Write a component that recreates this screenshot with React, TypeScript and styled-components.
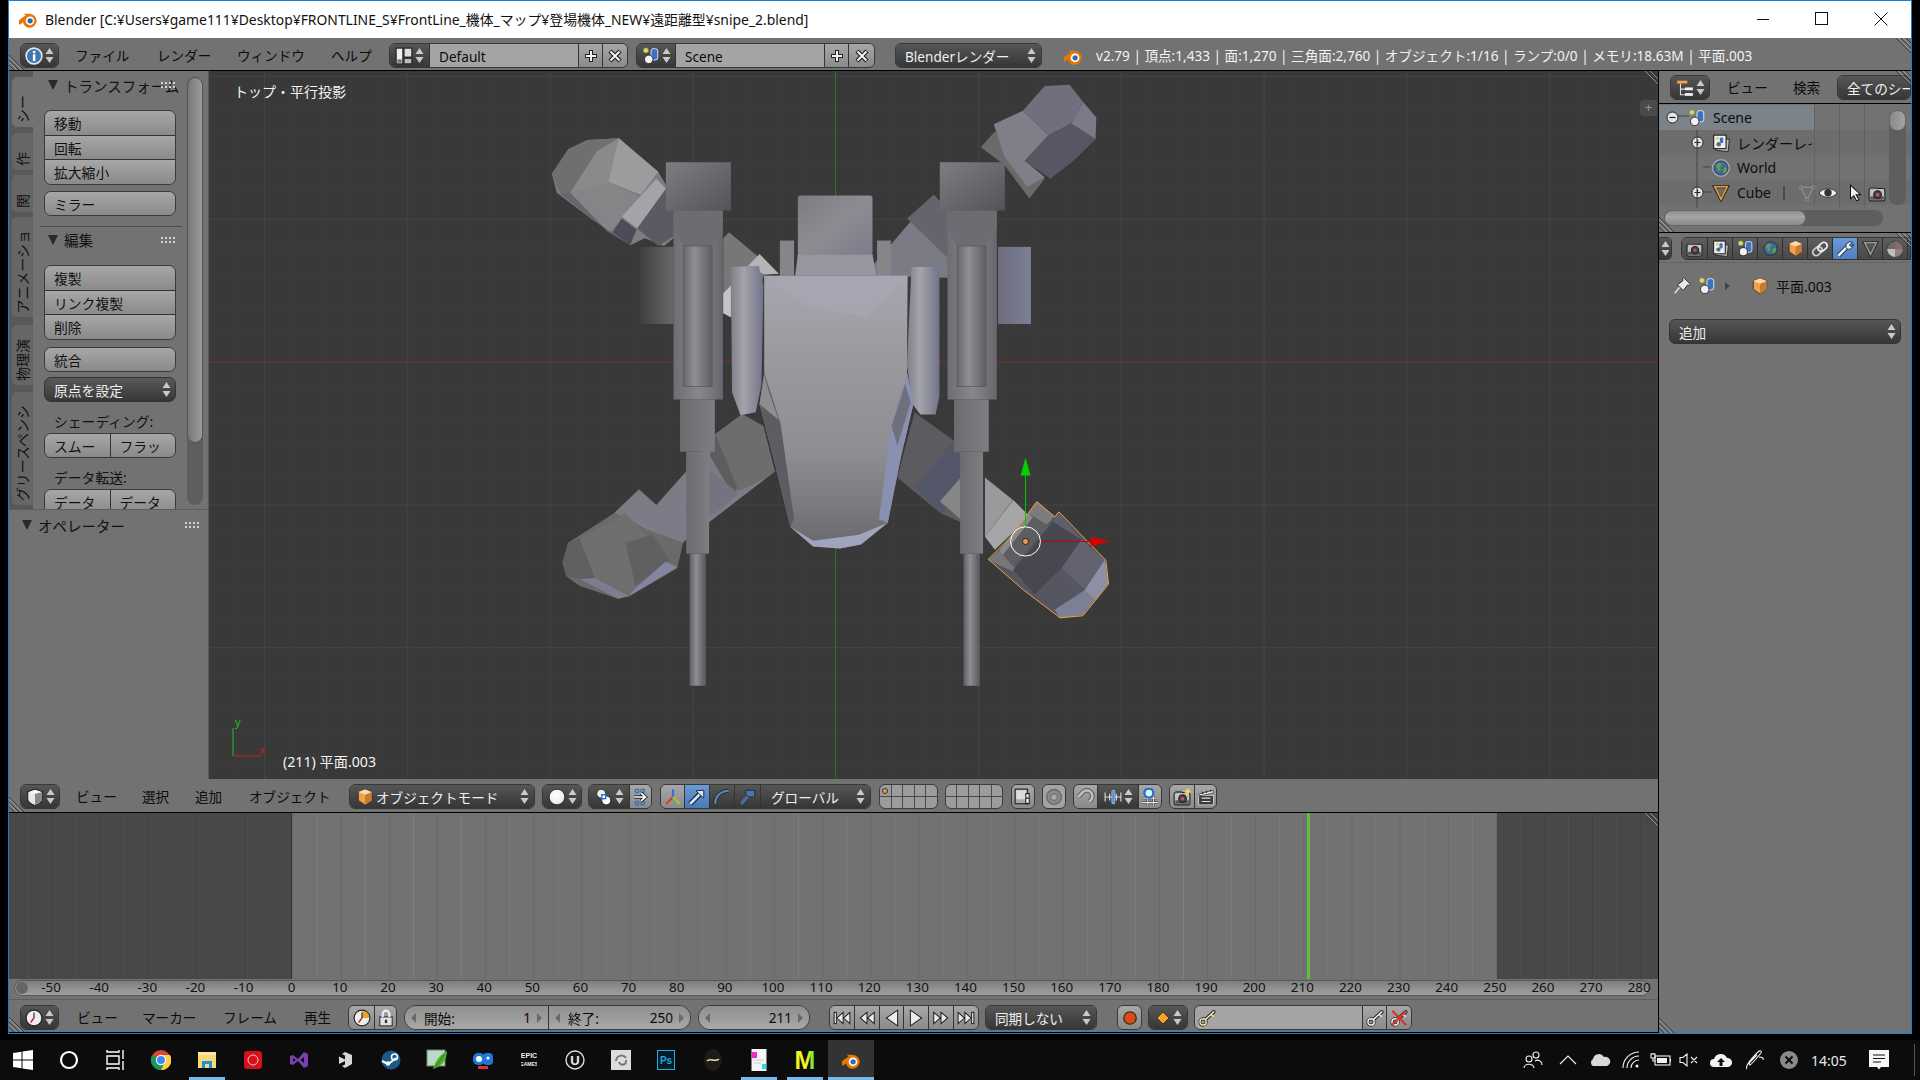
import React from "react";
import styled, { createGlobalStyle } from "styled-components";

const PANEL = "#727272";

const GlobalStyle = createGlobalStyle`
  html, body {
    margin: 0;
    padding: 0;
    background: #000;
  }
  body {
    width: 1920px;
    height: 1080px;
    overflow: hidden;
    font-family: "Noto Sans", "Noto Sans CJK JP", sans-serif;
  }
  * { box-sizing: border-box; }
`;

/* ---------- window frame ---------- */

const Page = styled.div`
  width: 1920px;
  height: 1080px;
  display: flex;
  flex-direction: column;
  background: #000;
`;

const Win = styled.div`
  width: 1904px;
  height: 1034px;
  margin-left: 8px;
  border: 1px solid #1a7fd0;
  display: flex;
  flex-direction: column;
`;

const TitleBar = styled.div`
  height: 37px;
  background: #fff;
  display: flex;
  align-items: center;
  padding: 0 0 2px 9px;
  color: #111;
  flex-shrink: 0;
`;

const TitleText = styled.span`
  margin-left: 7px;
  font-size: 13.9px;
  white-space: nowrap;
`;

const WinButtons = styled.div`
  margin-left: auto;
  margin-right: 1px;
  display: flex;
`;

const WinButton = styled.div`
  width: 59px;
  height: 35px;
  display: flex;
  align-items: center;
  justify-content: center;
`;

const Workspace = styled.div`
  flex: 1;
  display: flex;
  min-height: 0;
`;

const LeftCol = styled.div`
  width: 1650px;
  border-right: 1px solid #000;
  display: flex;
  flex-direction: column;
`;

const RightCol = styled.div`
  width: 252px;
  display: flex;
  flex-direction: column;
  background: ${PANEL};
`;

/* ---------- header bars and widgets ---------- */

const HeaderBar = styled.div<{ $h: number; $pad?: number }>`
  position: relative;
  height: ${(p) => p.$h}px;
  flex-shrink: 0;
  background: ${PANEL};
  border-bottom: 1px solid #000;
  display: flex;
  align-items: flex-start;
  padding-top: ${(p) => p.$pad ?? 5}px;
  padding-left: 11px;
  font-size: 13.6px;
  color: #0c0c0c;
`;

const MenuLabel = styled.div<{ $w: number; $ml?: number }>`
  width: ${(p) => p.$w}px;
  margin-left: ${(p) => p.$ml ?? 0}px;
  height: 25px;
  line-height: 25px;
  white-space: nowrap;
  flex-shrink: 0;
`;

const Group = styled.div<{ $w: number; $ml?: number; $round?: number }>`
  width: ${(p) => p.$w}px;
  margin-left: ${(p) => p.$ml ?? 0}px;
  height: 25px;
  flex-shrink: 0;
  display: flex;
  border: 1px solid #383838;
  border-radius: ${(p) => p.$round ?? 6}px;
  overflow: hidden;
`;

const toneBg = {
  dark: "linear-gradient(#565656, #363636)",
  light: "linear-gradient(#a7a7a7, #8a8a8a)",
  blue: "linear-gradient(#6a9ad8, #4a78b8)",
  flat: "#a4a4a4",
};

const Seg = styled.div<{ $tone: keyof typeof toneBg; $w?: number; $pad?: number }>`
  ${(p) => (p.$w ? `width:${p.$w}px; flex-shrink:0;` : "flex:1;")}
  min-width: 0;
  height: 100%;
  background: ${(p) => toneBg[p.$tone]};
  color: ${(p) => (p.$tone === "dark" ? "#f0f0f0" : "#0c0c0c")};
  display: flex;
  align-items: center;
  justify-content: ${(p) => (p.$pad !== undefined ? "flex-start" : "center")};
  padding-left: ${(p) => p.$pad ?? 0}px;
  gap: 2px;
  white-space: nowrap;
  font-size: 13.6px;
  & + & {
    border-left: 1px solid #333;
  }
`;

const SegText = styled.span`
  flex: 1;
  overflow: hidden;
  padding-top: 1px;
`;

const SegEnd = styled.span`
  width: 3px;
  flex-shrink: 0;
`;

const StatsText = styled.div`
  margin-left: 13px;
  line-height: 25px;
  font-size: 13.6px;
  color: #f2f2f2;
  white-space: nowrap;
`;

const LogoWrap = styled.div`
  margin-left: 21px;
  height: 25px;
  display: flex;
  align-items: center;
`;

const Hatch = styled.svg<{ $side: string }>`
  position: absolute;
  width: 15px;
  height: 15px;
  ${(p) => p.$side}
`;

const Corner = ({ side, flip }: { side: string; flip?: boolean }) => (
  <Hatch $side={side} viewBox="0 0 15 15">
    <g stroke="#3a3a3a" strokeWidth="1" opacity="0.9">
      {flip ? (
        <>
          <path d="M0 0 15 15M5 0 15 10M10 0 15 5" />
          <path d="M2 0 15 13M7 0 15 8" stroke="#9a9a9a" />
        </>
      ) : (
        <>
          <path d="M0 0 15 15M0 5 10 15M0 10 5 15" />
          <path d="M0 2 13 15M0 7 8 15" stroke="#9a9a9a" />
        </>
      )}
    </g>
  </Hatch>
);

/* ---------- small icons ---------- */

const IcSvg = styled.svg`
  flex-shrink: 0;
`;

const Ic = ({ s = 18, children }: { s?: number; children: React.ReactNode }) => (
  <IcSvg width={s} height={s} viewBox="0 0 16 16">
    {children}
  </IcSvg>
);

const UpDown = ({ c = "#c9c9c9" }: { c?: string }) => (
  <IcSvg width="9" height="17" viewBox="0 0 9 17">
    <path d="M4.5 1 8.5 7H.5zM4.5 16 .5 10h8z" fill={c} />
  </IcSvg>
);

const InfoIcon = () => (
  <Ic>
    <circle cx="8" cy="8" r="7" fill="#3f77b5" stroke="#e8e8e8" strokeWidth="1.4" />
    <rect x="7" y="3.5" width="2.2" height="2" fill="#fff" />
    <rect x="7" y="6.5" width="2.2" height="6" fill="#fff" />
  </Ic>
);

const LayoutIcon = () => (
  <Ic>
    <rect x="1" y="1" width="6" height="14" fill="#eee" stroke="#222" />
    <rect x="8" y="1" width="7" height="8" fill="#ddd" stroke="#222" />
    <rect x="8" y="10" width="7" height="5" fill="#bbb" stroke="#222" />
    <rect x="2" y="11" width="4" height="3" fill="#777" />
  </Ic>
);

const SceneIcon = ({ s = 18 }: { s?: number }) => (
  <Ic s={s}>
    <circle cx="3.5" cy="3" r="2.4" fill="#d8d86a" stroke="#76763a" strokeWidth=".6" />
    <rect x="8" y="1.5" width="6" height="10" rx="2" fill="#3c72c4" stroke="#e8eefa" strokeWidth=".8" />
    <circle cx="6" cy="11" r="3.8" fill="#f2f2f2" stroke="#222" strokeWidth=".8" />
  </Ic>
);

const BlenderLogo = ({ s = 20 }: { s?: number }) => (
  <Ic s={s}>
    <path
      d="M1 8.8 6.2 5 4.4 3.8h5a6 6 0 0 1 5.6 5.6A6 6 0 0 1 9.2 15 5.2 5.2 0 0 1 4 10.6L1.7 12.5C.6 12.5.6 9.5 1 8.8z"
      fill="#ea7600"
    />
    <circle cx="9.6" cy="9.4" r="3.5" fill="#fff" />
    <circle cx="9.7" cy="9.4" r="2.1" fill="#2a6cb0" />
  </Ic>
);

const PlusIcon = () => (
  <Ic s={16}>
    <path d="M8 2v12M2 8h12" stroke="#222" strokeWidth="4" />
    <path d="M8 3v10M3 8h10" stroke="#f2f2f2" strokeWidth="2" />
  </Ic>
);

const CrossIcon = () => (
  <Ic s={16}>
    <path d="M3 3 13 13M13 3 3 13" stroke="#222" strokeWidth="4.4" />
    <path d="M3.5 3.5 12.5 12.5M12.5 3.5 3.5 12.5" stroke="#f2f2f2" strokeWidth="2" />
  </Ic>
);

const ViewCube = () => (
  <Ic>
    <path d="M8 1 14.5 3.5V10C14.5 13 11 14.5 8 15.5 5 14.5 1.5 13 1.5 10V3.5z" fill="#e8e8e8" stroke="#222" />
    <path d="M8 5 14 3.5V10C14 12.5 11 14 8 15z" fill="#888" />
    <path d="M2 3.7 8 5 14 3.5 8 1.5z" fill="#fafafa" />
  </Ic>
);

const OrangeCube = ({ s = 18 }: { s?: number }) => (
  <Ic s={s}>
    <path d="M8 1 14 3.5V11L8 15 2 11V3.5z" fill="#f4a04a" stroke="#333" strokeWidth=".8" />
    <path d="M8 6 14 3.5V11L8 15z" fill="#c87c32" />
    <path d="M2 3.5 8 6 14 3.5 8 1z" fill="#fbd9a8" />
  </Ic>
);

const Sphere = () => (
  <Ic>
    <defs>
      <radialGradient id="sph" cx=".45" cy=".4" r=".7">
        <stop offset="0" stopColor="#fff" />
        <stop offset=".7" stopColor="#eee" />
        <stop offset="1" stopColor="#999" />
      </radialGradient>
    </defs>
    <circle cx="8" cy="8" r="7" fill="url(#sph)" stroke="#222" strokeWidth=".8" />
  </Ic>
);

const PivotIcon = () => (
  <Ic>
    <circle cx="5.5" cy="5" r="4" fill="#eee" stroke="#222" strokeWidth=".8" />
    <circle cx="10" cy="11" r="4" fill="#fff" stroke="#222" strokeWidth=".8" />
    <rect x="6" y="6" width="3.5" height="3.5" fill="#dff" stroke="#2a6cd0" strokeWidth="1.2" />
  </Ic>
);

const AlignIcon = () => (
  <Ic>
    <g fill="none" stroke="#3a6cc0" strokeWidth="1.2">
      <rect x="3" y="1" width="3" height="3" rx="1" />
      <rect x="8" y="1" width="3" height="3" rx="1" />
      <rect x="3" y="12" width="3" height="3" rx="1" />
      <rect x="8" y="12" width="3" height="3" rx="1" />
    </g>
    <path d="M2 8h10M8 4.5 12 8 8 11.5" stroke="#222" strokeWidth="3" fill="none" />
    <path d="M2 8h10M8 4.5 12 8 8 11.5" stroke="#fff" strokeWidth="1.5" fill="none" />
  </Ic>
);

const AxisIcon = () => (
  <Ic>
    <path d="M8 8 8 1" stroke="#3a6ee0" strokeWidth="2" />
    <path d="M8 8 2 14" stroke="#e03a2a" strokeWidth="2" />
    <path d="M8 8 14 14" stroke="#8ed028" strokeWidth="2" />
  </Ic>
);

const MoveArrow = () => (
  <Ic>
    <path d="M2 14 11 5" stroke="#123" strokeWidth="4.5" />
    <path d="M2 14 11 5" stroke="#d8e8fa" strokeWidth="2.4" />
    <path d="M7 2.5 14 2V9z" fill="#d8e8fa" stroke="#123" strokeWidth=".8" />
  </Ic>
);

const RotateArc = () => (
  <Ic>
    <path d="M2 14C2 7 7 2.5 14 2.5" stroke="#222" strokeWidth="3.4" fill="none" />
    <path d="M2 14C2 7 7 2.5 14 2.5" stroke="#5a86c0" strokeWidth="2" fill="none" />
  </Ic>
);

const ScalePin = () => (
  <Ic>
    <path d="M2 14 8 7" stroke="#456ea8" strokeWidth="3" />
    <path d="M6 2h8v6H9L6 6z" fill="#4a76b4" stroke="#223" strokeWidth=".8" />
  </Ic>
);

const LayerCopy = () => (
  <Ic>
    <rect x="1" y="1" width="11" height="13" fill="#a8a8a8" stroke="#222" />
    <rect x="2" y="2" width="9" height="8" fill="#ddd" />
    <path d="M12 5v4M12 9v4" stroke="#fff" strokeWidth="3" />
    <path d="M10.5 5h3v4h-3zM10.5 9h3v5h-3z" fill="none" stroke="#222" />
  </Ic>
);

const ProportionalIcon = () => (
  <Ic>
    <circle cx="8" cy="8" r="6.5" fill="#8c8c8c" stroke="#6e6e6e" strokeWidth="1.5" />
    <circle cx="8" cy="8" r="3" fill="#aaa" stroke="#777" strokeWidth="1.4" />
  </Ic>
);

const MagnetIcon = () => (
  <Ic>
    <path d="M3 13V6.5a4.5 4.5 0 0 1 4.5-4.5 5 5 0 0 1 5.5 5v2" transform="rotate(45 8 8)" fill="none" stroke="#555" strokeWidth="4" />
    <path d="M3 13V6.5a4.5 4.5 0 0 1 4.5-4.5 5 5 0 0 1 5.5 5v2" transform="rotate(45 8 8)" fill="none" stroke="#bdbdbd" strokeWidth="2.4" />
  </Ic>
);

const SnapIcon = () => (
  <Ic>
    <path d="M1 4v8M15 4v8M1 8h14M5 5v6M11 5v6" stroke="#ddd" strokeWidth="1" />
    <rect x="7" y="2" width="2.6" height="12" rx="1" fill="#4a8ae0" stroke="#cde" strokeWidth=".6" />
  </Ic>
);

const GridDot = () => (
  <Ic>
    <path d="M1 9h14M1 13h14M6 7v9M11 7v9" stroke="#222" strokeWidth="1.8" />
    <path d="M1 9h14M1 13h14M6 7v9M11 7v9" stroke="#eee" strokeWidth=".9" />
    <circle cx="7" cy="4.5" r="4" fill="#cfe" stroke="#2a6ad0" strokeWidth="2" />
  </Ic>
);

const CameraIcon = ({ s = 18, star }: { s?: number; star?: boolean }) => (
  <Ic s={s}>
    <rect x="1" y="4" width="14" height="11" rx="1.5" fill="#c2c2c2" stroke="#222" />
    <rect x="2" y="2.5" width="6" height="2" fill="#555" />
    <rect x="2" y="11" width="12" height="3" fill="#555" />
    <circle cx="8.5" cy="9.5" r="3.4" fill="#444" stroke="#222" />
    <circle cx="8.5" cy="9.5" r="1.6" fill="#c85050" />
    {star && <path d="M13 .5V6M10.3 3.2H15.7" stroke="#f2d860" strokeWidth="2" />}
  </Ic>
);

const ClapIcon = () => (
  <Ic>
    <rect x="1.5" y="6.5" width="13" height="8.5" fill="#3a3a3a" stroke="#ddd" strokeWidth=".7" />
    <path d="M1.5 5.5 14 2 14.5 4.5 2 7z" fill="#eee" stroke="#222" strokeWidth=".6" />
    <path d="M4 9h8M4 12h8" stroke="#ddd" />
    <path d="M4.5 5 5.5 3.5M8 4 9 2.7M11.5 3 12.5 2" stroke="#222" strokeWidth="1.2" />
  </Ic>
);

const ClockIcon = ({ part }: { part?: boolean }) => (
  <Ic>
    <circle cx="8" cy="8" r="7" fill="#eee" stroke="#222" />
    {part && <path d="M8 1.5A6.500 6.500 0 0 1 14.500 8H8z" fill="#f0a030" />}
    <path d="M8 8 5 12" stroke="#c82020" strokeWidth="1.2" />
    <path d="M8 8V3" stroke="#222" strokeWidth="1" />
  </Ic>
);

const LockIcon = () => (
  <Ic>
    <rect x="2.5" y="7" width="11" height="8" fill="#e2e2e2" stroke="#333" />
    <path d="M5 7V4.5a3 3 0 0 1 6 0V7" fill="none" stroke="#eee" strokeWidth="2" />
    <rect x="7" y="9.5" width="2" height="3" fill="#333" />
  </Ic>
);

const tri = { fill: "#ececec", stroke: "#222", strokeWidth: 0.9 };

const Transport = ({ kind }: { kind: string }) => {
  const shapes: Record<string, React.ReactNode> = {
    first: (
      <>
        <rect x="1" y="3" width="2" height="10" {...tri} />
        <path d="M9 3v10L3.5 8zM15 3v10L9.5 8z" {...tri} />
      </>
    ),
    prev: <path d="M8 3v10L2 8zM14.5 3v10L8.5 8z" {...tri} />,
    back: <path d="M13 1v14L3 8z" {...tri} />,
    play: <path d="M3 1v14L13 8z" {...tri} />,
    next: <path d="M1.5 3v10L7.5 8zM8 3v10L14 8z" {...tri} />,
    last: (
      <>
        <path d="M1 3v10L6.5 8zM7 3v10L12.5 8z" {...tri} />
        <rect x="13" y="3" width="2" height="10" {...tri} />
      </>
    ),
  };
  return <Ic>{shapes[kind]}</Ic>;
};

const RecordIcon = () => (
  <Ic>
    <circle cx="8" cy="8" r="5.5" fill="#e04a1a" stroke="#331" strokeWidth="1.2" />
  </Ic>
);

const DiamondIcon = () => (
  <Ic s={16}>
    <path d="M8 2 14 8 8 14 2 8z" fill="#f0a428" stroke="#322" strokeWidth=".8" />
  </Ic>
);

const KeyIcon = ({ gold, red }: { gold?: boolean; red?: boolean }) => (
  <Ic>
    <g fill="none" strokeLinecap="round">
      <circle cx="4.5" cy="11.5" r="2.8" stroke="#222" strokeWidth="2.6" />
      <path d="M6.5 9.5 14 2.5" stroke="#222" strokeWidth="3.2" />
      <circle cx="4.5" cy="11.5" r="2.8" stroke={gold ? "#efe2a8" : "#eee"} strokeWidth="1.3" />
      <path d="M6.5 9.5 14 2.5M12 5l1.5 1.5" stroke={gold ? "#efe2a8" : "#eee"} strokeWidth="1.4" />
    </g>
    {red && <path d="M2 1.5 14.5 14.5M14 2 2 14" stroke="#d83030" strokeWidth="1.8" />}
  </Ic>
);

const OutlinerIcon = () => (
  <Ic>
    <path d="M4 4v10h4M4 9h4" stroke="#ddd" fill="none" />
    <rect x="1" y="1.5" width="9" height="2.5" fill="#f0a848" />
    <rect x="8" y="7.5" width="7" height="2.5" fill="#eee" />
    <rect x="8" y="12.5" width="7" height="2.5" fill="#eee" />
  </Ic>
);

const RenderLayers = ({ s = 18 }: { s?: number }) => (
  <Ic s={s}>
    <rect x="4" y="4" width="11" height="11" fill="#bbb" stroke="#333" transform="rotate(6 9 9)" />
    <rect x="1.5" y="1" width="11" height="12" fill="#eee" stroke="#222" />
    <circle cx="5" cy="4" r="1.3" fill="#d8d86a" />
    <rect x="7" y="3" width="3" height="5" rx="1" fill="#3c72c4" />
    <circle cx="6" cy="9" r="2" fill="#666" />
  </Ic>
);

const WorldIcon = ({ s = 18, ring }: { s?: number; ring?: boolean }) => (
  <Ic s={s}>
    {ring && <circle cx="8" cy="8" r="8" fill="#a9a9b9" />}
    <circle cx="8" cy="8" r="6.3" fill="#3a6e9c" stroke="#223" strokeWidth=".7" />
    <path d="M3 5.5 7 3l2 2-2 2 .8 3-2 1-1-3zM9.5 9l3-2 1 1.5-1 3.5-2 .7z" fill="#6a9a48" />
  </Ic>
);

const MeshTri = ({ c = "#f09a3c", s = 18 }: { c?: string; s?: number }) => (
  <Ic s={s}>
    <path d="M2 2.5H14L8 14z" fill="none" stroke="#2a2a2a" strokeWidth="2.6" />
    <path d="M2.5 2.5H13.5L8 13.5z" fill="none" stroke={c} strokeWidth="1.4" />
  </Ic>
);

const MeshGhost = () => (
  <Ic>
    <path d="M2.5 3H13.5L8 14z" fill="none" stroke="#8c8c8c" strokeWidth="1.2" />
    <circle cx="2.5" cy="3" r="1.5" fill="#6e6e6e" stroke="#999" strokeWidth=".6" />
    <circle cx="13.5" cy="3" r="1.5" fill="#6e6e6e" stroke="#999" strokeWidth=".6" />
    <circle cx="8" cy="14" r="1.5" fill="#6e6e6e" stroke="#999" strokeWidth=".6" />
  </Ic>
);

const EyeIcon = () => (
  <Ic>
    <path d="M.2 8C3 3 13 3 15.8 8 13 13 3 13 .2 8z" fill="#f5f5f5" stroke="#222" strokeWidth=".7" />
    <circle cx="8" cy="7.800" r="3.3" fill="#333" />
  </Ic>
);

const CursorIcon = () => (
  <Ic>
    <path d="M4 1V13L7 10.5 9.5 15 11.5 14 9 9.5H13z" fill="#f2f2f2" stroke="#111" strokeWidth=".9" />
  </Ic>
);

const ChainIcon = () => (
  <Ic>
    <g fill="none" transform="rotate(-40 8 8)">
      <rect x=".5" y="5" width="9" height="6" rx="3" stroke="#ccc" strokeWidth="1.6" />
      <rect x="6.5" y="5" width="9" height="6" rx="3" stroke="#eee" strokeWidth="1.6" />
    </g>
  </Ic>
);

const WrenchIcon = () => (
  <Ic>
    <path d="M2 14 10 6" stroke="#123" strokeWidth="4" />
    <path d="M2 14 10 6" stroke="#e8f0fa" strokeWidth="2.4" />
    <path d="M9 7A4 4 0 0 1 14.5 2L12 4.5 13.5 6 15.2 3.5A4 4 0 0 1 10 8z" fill="#e8f0fa" stroke="#123" strokeWidth=".8" />
  </Ic>
);

const MaterialIcon = () => (
  <Ic>
    <circle cx="8" cy="8" r="7" fill="#6a6a6a" stroke="#333" strokeWidth=".6" />
    <path d="M8 1A7 7 0 0 1 15 8H8z" fill="#8a6a60" />
    <path d="M1 8A7 7 0 0 0 8 15V8z" fill="#c0bcba" />
    <path d="M8 15A7 7 0 0 0 15 8H8z" fill="#948080" />
  </Ic>
);

const PinIcon = () => (
  <Ic>
    <path d="M1.5 14.5 6.5 8.5" stroke="#ddd" strokeWidth="1.5" />
    <path d="M4 7 9 3l-.5-1.5 1-1 6 6-1 1L13 7l-4 5z" fill="#e8e8e8" stroke="#222" strokeWidth=".8" />
  </Ic>
);

const Expander = ({ open }: { open?: boolean }) => (
  <IcSvg width="13" height="13" viewBox="0 0 13 13">
    <circle cx="6.5" cy="6.5" r="5.5" fill="#e4e4e4" stroke="#222" />
    <path d={open ? "M3.5 6.5h6" : "M3.5 6.5h6M6.5 3.5v6"} stroke="#222" strokeWidth="1.2" />
  </IcSvg>
);

/* ---------- toolshelf ---------- */

const View3D = styled.div`
  height: 708px;
  display: flex;
  flex-shrink: 0;
`;

const Toolshelf = styled.div`
  width: 200px;
  flex-shrink: 0;
  display: flex;
  flex-direction: column;
  background: ${PANEL};
  border-right: 1px solid #5a5a5a;
`;

const ToolshelfTop = styled.div`
  height: 438px;
  display: flex;
  overflow: hidden;
`;

const TabStrip = styled.div`
  width: 24px;
  flex-shrink: 0;
  background: #585858;
  padding: 6px 0 0 3px;
  display: flex;
  flex-direction: column;
`;

const VTab = styled.div<{ $h: number; $mb: number; $on?: boolean }>`
  width: 21px;
  height: ${(p) => p.$h}px;
  margin-bottom: ${(p) => p.$mb}px;
  padding-bottom: 4px;
  background: ${(p) => (p.$on ? PANEL : "#666")};
  border-radius: 5px 0 0 5px;
  display: flex;
  align-items: flex-end;
  justify-content: center;
  overflow: hidden;
`;

const VTabText = styled.span`
  writing-mode: vertical-rl;
  text-orientation: sideways;
  transform: rotate(180deg);
  font-size: 14px;
  line-height: 15px;
  color: #111;
  white-space: nowrap;
`;

const PanelCol = styled.div`
  width: 154px;
  flex-shrink: 0;
  padding-left: 11px;
  font-size: 13.8px;
  color: #111;
`;

const PanelHead = styled.div<{ $h: number; $mb: number; $w?: number }>`
  height: ${(p) => p.$h}px;
  margin-bottom: ${(p) => p.$mb}px;
  display: flex;
  align-items: center;
  position: relative;
  font-size: 14.5px;
  white-space: nowrap;
  width: ${(p) => p.$w ?? 132}px;
`;

const Tri = styled.span`
  width: 0;
  height: 0;
  margin: 0 6px 0 4px;
  border-left: 5px solid transparent;
  border-right: 5px solid transparent;
  border-top: 10px solid #2a2a2a;
  flex-shrink: 0;
`;

const GripBox = styled.svg<{ $right: number }>`
  position: absolute;
  right: ${(p) => p.$right}px;
  top: 50%;
  margin-top: -3px;
  width: 15px;
  height: 7px;
`;

const Grip = ({ right = 0 }: { right?: number }) => (
  <GripBox $right={right} viewBox="0 0 15 7">
    {[0, 4, 8, 12].map((x) =>
      [0, 4].map((y) => <rect key={`${x}${y}`} x={x} y={y} width="2" height="2" fill="#d0d0d0" />)
    )}
  </GripBox>
);

const Stack = styled.div<{ $n: number; $mt?: number }>`
  width: 132px;
  height: ${(p) => p.$n * 25}px;
  margin-top: ${(p) => p.$mt ?? 0}px;
  border: 1px solid #3a3a3a;
  border-radius: 7px;
  overflow: hidden;
  display: flex;
  flex-direction: column;
`;

const StackBtn = styled.div`
  flex: 1;
  padding-left: 9px;
  display: flex;
  align-items: center;
  background: linear-gradient(#a7a7a7, #8a8a8a);
  white-space: nowrap;
  & + & {
    border-top: 1px solid #333;
  }
`;

const DarkMenu = styled.div<{ $mt?: number }>`
  width: 132px;
  height: 25px;
  margin-top: ${(p) => p.$mt ?? 0}px;
  padding: 0 4px 0 9px;
  border: 1px solid #333;
  border-radius: 7px;
  background: linear-gradient(#5a5a5a, #363636);
  color: #f0f0f0;
  display: flex;
  align-items: center;
  justify-content: space-between;
`;

const Divider = styled.div`
  width: 142px;
  height: 1px;
  margin: 10px 0 0 -4px;
  background: #4e4e4e;
`;

const SubLabel = styled.div`
  height: 20px;
  margin-top: 10px;
  padding-left: 10px;
  line-height: 19px;
`;

const SplitRow = styled.div`
  width: 132px;
  height: 25px;
  margin-top: 1px;
  border: 1px solid #3a3a3a;
  border-radius: 7px;
  overflow: hidden;
  display: flex;
`;

const SplitBtn = styled.div`
  flex: 1;
  padding-left: 9px;
  display: flex;
  align-items: center;
  background: linear-gradient(#a7a7a7, #8a8a8a);
  & + & {
    border-left: 1px solid #333;
  }
`;

const ScrollTrack = styled.div`
  width: 16px;
  height: 428px;
  margin-top: 6px;
  border-radius: 8px;
  background: #5e5e5e;
  flex-shrink: 0;
`;

const ScrollThumb = styled.div`
  height: 366px;
  border-radius: 8px;
  background: linear-gradient(90deg, #777, #9c9c9c);
  border: 1px solid #555;
`;

const OperatorPanel = styled.div`
  flex: 1;
  border-top: 1px solid #5e5e5e;
  padding: 3px 0 0 9px;
  color: #111;
`;

/* ---------- 3d viewport ---------- */

const Viewport = styled.div`
  flex: 1;
  position: relative;
  overflow: hidden;
  background-color: #393939;
  background-image: linear-gradient(90deg, #434343 1px, transparent 1px),
    linear-gradient(#434343 1px, transparent 1px),
    linear-gradient(90deg, #3c3c3c 1px, transparent 1px),
    linear-gradient(#3c3c3c 1px, transparent 1px);
  background-size: 142.8px 142.8px, 142.8px 142.8px, 28.56px 28.56px, 28.56px 28.56px;
  background-position: 55px 0, 0 5px, 27px 0, 0 5px;
`;

const ViewName = styled.div`
  position: absolute;
  left: 25px;
  top: 10px;
  color: #f4f4f4;
  font-size: 14px;
`;

const ObjName = styled.div`
  position: absolute;
  left: 74px;
  top: 680px;
  color: #f4f4f4;
  font-size: 14.2px;
`;

const AxisWidget = styled.svg`
  position: absolute;
  left: 20px;
  top: 645px;
  width: 44px;
  height: 50px;
`;

const AxisLines = styled.svg`
  position: absolute;
  left: 0;
  top: 0;
`;

const ModelSvg = styled.svg`
  position: absolute;
  left: 321px;
  top: 9px;
  width: 600px;
  height: 620px;
`;

const PlusTab = styled.div`
  position: absolute;
  right: 1px;
  top: 29px;
  width: 17px;
  height: 16px;
  border-radius: 4px 0 0 4px;
  background: #4a4a4a;
  color: #999;
  font-size: 13px;
  line-height: 15px;
  text-align: center;
`;

type Face = [string, string];

const backFaces: Face[] = [
  // upper left pod
  ["57,237 100,175 150,152 232,147 335,232 355,265 375,300 375,400 350,420 300,400 262,418 212,385 145,340 70,285", "#7d7d7f"],
  ["57,237 100,175 150,152 232,147 175,180 105,285 78,287", "#6f6f72"],
  ["175,180 232,147 270,180 205,258 155,310 105,285", "#8a8a8c"],
  ["232,147 335,232 290,290 205,258", "#9c9c9e"],
  ["105,285 205,258 285,295 240,350 205,385", "#858587"],
  ["78,287 105,285 205,385 262,418 165,355", "#66666e"],
  ["215,385 240,350 278,378 262,418", "#4c4c58"],
  ["280,375 355,275 375,300 375,395 335,420", "#5a5a62"],
  ["240,345 330,250 355,275 280,375", "#a4a4a8"],
  // inner upper left arm
  ["505,400 520,385 650,490 612,492 600,530 525,600 505,590", "#777778"],
  ["570,470 600,440 650,490 612,492", "#b5b5b8"],
  ["505,540 525,520 525,600 505,590", "#c4c4c6"],
  // upper right pod and arm
  ["1178,170 1215,130 1345,250 1305,300 1240,215", "#6a6a6a"],
  ["1212,112 1288,78 1355,140 1293,205 1345,245 1300,270 1240,195", "#7f7f88"],
  ["1288,78 1345,15 1410,12 1445,55 1415,110 1355,140", "#6f6f7d"],
  ["1355,140 1415,110 1478,150 1420,205 1360,250 1293,205", "#565664"],
  ["1415,110 1445,55 1480,95 1478,150", "#7a7a88"],
  // inner upper right arm
  ["895,470 1055,290 1092,330 1092,500 905,495", "#7b7b85"],
  ["985,350 1055,290 1092,330 1092,450", "#64646f"],
  // lower left arm
  ["220,1095 285,1035 330,1075 408,990 485,895 555,845 640,990 540,1065 405,1165 360,1215 300,1135", "#7c7c88"],
  ["470,950 485,895 545,1030 530,1050", "#5d5d5d"],
  ["485,895 555,845 610,875 640,990 610,1010 545,1040", "#6d6d6d"],
  ["468,985 545,1045 500,1085 468,1100", "#74747f"],
  // lower left pod
  ["85,1220 100,1170 220,1095 300,1135 400,1170 385,1235 260,1305 230,1312 130,1280 95,1255", "#6a6a6a"],
  ["85,1220 100,1170 130,1160 170,1260 130,1262 95,1255", "#606060"],
  ["130,1160 250,1095 365,1215 265,1300 170,1260", "#6f6f6f"],
  ["250,1170 320,1150 365,1215 275,1280", "#606060"],
  ["130,1262 170,1260 260,1305 230,1312", "#7d7d90"],
  ["260,1305 385,1232 355,1218 270,1290", "#8484a0"],
  // lower right arm
  ["960,1005 1005,840 1112,915 1130,950 1130,1120 1075,1097", "#5c5c60"],
  ["1005,1030 1100,920 1130,950 1130,1050 1075,1097", "#54566a"],
  ["1071,1066 1128,1003 1128,1113", "#868686"],
  ["1189,1005 1262,1062 1189,1155", "#9a9a9c"],
  ["1189,1155 1263,1062 1306,1104 1215,1188", "#a6a6a8"],
];

const selectedFaces: Face[] = [
  ["1197,1214 1226,1190 1267,1226 1263,1243", "#777777"],
  ["1302,1096 1324,1065 1371,1104 1350,1125", "#7c7c7c"],
  ["1226,1190 1236,1201 1315,1106 1302,1096", "#8a8a8a"],
  ["1236,1201 1315,1106 1354,1129 1263,1231", "#5e5e60"],
  ["1367,1117 1380,1092 1441,1163", "#5f5f6c"],
  ["1263,1239 1367,1117 1441,1163 1389,1235 1319,1302", "#47474f"],
  ["1441,1163 1502,1214 1450,1290 1389,1235", "#63636f"],
  ["1319,1302 1389,1235 1450,1290 1371,1340", "#565662"],
  ["1502,1214 1511,1273 1445,1353 1385,1361 1371,1340 1450,1290", "#7c8094"],
  ["1450,1290 1502,1214 1511,1273 1478,1315", "#8e90a6"],
];

const SELECTED_OUTLINE =
  "1325,1067 1372,1105 1382,1092 1505,1215 1512,1275 1445,1355 1385,1360 1290,1290 1198,1212 1262,1150 1310,1085";

const Gun = ({ x }: { x: number }) => (
  <g>
    <rect x={x + 62} y="1198" width="43" height="334" fill="url(#gunThin)" />
    <rect x={x + 53} y="940" width="60" height="258" fill="url(#gunTube)" />
    <rect x={x + 37} y="808" width="91" height="132" fill="url(#gunTube)" />
    <rect x={x + 20} y="330" width="129" height="478" fill="url(#gunBody)" />
    <polygon points={`${x + 20},330 ${x + 149},330 ${x + 149},375 ${x + 120},420 ${x + 45},420 ${x + 20},375`} fill="#6c6c72" />
    <rect x={x + 45} y="420" width="76" height="355" fill="url(#gunRecess)" stroke="#5a5a60" strokeWidth="2" />
    <rect x={x} y="208" width="170" height="122" fill="url(#gunHead)" />
  </g>
);

const Robot = () => (
  <ModelSvg viewBox="0 0 1568 1568" preserveAspectRatio="none">
    <defs>
      <linearGradient id="gunThin">
        <stop offset="0" stopColor="#5e5e62" />
        <stop offset=".4" stopColor="#8e8e94" />
        <stop offset="1" stopColor="#55555a" />
      </linearGradient>
      <linearGradient id="gunTube">
        <stop offset="0" stopColor="#6c6c70" />
        <stop offset="1" stopColor="#7e7e82" />
      </linearGradient>
      <linearGradient id="gunBody">
        <stop offset="0" stopColor="#6e6e72" />
        <stop offset=".5" stopColor="#88888c" />
        <stop offset="1" stopColor="#66666c" />
      </linearGradient>
      <linearGradient id="gunRecess">
        <stop offset="0" stopColor="#66666a" />
        <stop offset=".4" stopColor="#909094" />
        <stop offset="1" stopColor="#5c5c62" />
      </linearGradient>
      <linearGradient id="gunHead" x1="0" y1="0" x2="1" y2="1">
        <stop offset="0" stopColor="#7e7e82" />
        <stop offset="1" stopColor="#545458" />
      </linearGradient>
      <linearGradient id="plateL">
        <stop offset="0" stopColor="#3e3e3e" />
        <stop offset="1" stopColor="#686868" />
      </linearGradient>
      <linearGradient id="plateR">
        <stop offset="0" stopColor="#6c6c7a" />
        <stop offset="1" stopColor="#7c8098" />
      </linearGradient>
      <linearGradient id="headG" x1="0" y1="0" x2="1" y2="1">
        <stop offset="0" stopColor="#7c7c80" />
        <stop offset=".5" stopColor="#8c8c92" />
        <stop offset="1" stopColor="#7c7c8c" />
      </linearGradient>
      <linearGradient id="bodyG" x1="0" y1="0" x2="0" y2="1">
        <stop offset="0" stopColor="#a6a6b2" />
        <stop offset=".25" stopColor="#9c9ca0" />
        <stop offset=".65" stopColor="#8e8e92" />
        <stop offset="1" stopColor="#68686e" />
      </linearGradient>
      <linearGradient id="wingG">
        <stop offset="0" stopColor="#80808a" />
        <stop offset=".4" stopColor="#a4a4ac" />
        <stop offset="1" stopColor="#72728a" />
      </linearGradient>
    </defs>

    {backFaces.map(([pts, c]) => (
      <polygon key={pts} points={pts} fill={c} />
    ))}

    <polygon points={SELECTED_OUTLINE} fill="#55555f" />
    {selectedFaces.map(([pts, c]) => (
      <polygon key={pts} points={pts} fill={c} />
    ))}
    <polygon points={SELECTED_OUTLINE} fill="none" stroke="#f0a040" strokeWidth="1" vectorEffect="non-scaling-stroke" />

    <rect x="287" y="422" width="88" height="195" fill="url(#plateL)" />
    <rect x="1223" y="422" width="86" height="195" fill="url(#plateR)" />
    <Gun x={355} />
    <Gun x={1071} />

    <rect x="653" y="406" width="37" height="89" fill="#85858a" />
    <rect x="907" y="406" width="36" height="89" fill="#85858a" />
    <polygon points="700,440 895,440 905,495 693,495" fill="#96969e" />
    <rect x="700" y="292" width="195" height="150" rx="6" fill="url(#headG)" />
    <polygon points="525,473 598,470 610,520 605,770 590,840 550,848 528,790" fill="url(#wingG)" />
    <polygon points="997,473 1070,473 1070,800 1060,846 1020,846 1000,820 985,720" fill="url(#wingG)" />
    <polygon
      points="612,495 987,495 985,740 1003,815 970,950 935,1120 865,1175 810,1185 740,1180 680,1130 640,970 600,820 612,740"
      fill="url(#bodyG)"
    />
    <polygon points="612,495 987,495 880,600 720,570" fill="#a8a8b6" opacity=".6" />
    <polygon points="612,740 600,820 640,970 680,1130 690,1110 655,870" fill="#5c5c62" />
    <polygon points="612,745 600,820 650,860 625,790" fill="#8e8e92" />
    <polygon points="985,740 1003,815 970,950 935,1120 912,1110 945,870" fill="#8a90b0" />
    <polygon points="980,770 995,815 960,925 945,875" fill="#70707a" />
    <polygon points="680,1130 740,1165 860,1150 935,1120 865,1175 810,1185 740,1180" fill="#a0a4bc" />

    <path d="M1295 1130V985" fill="none" vectorEffect="non-scaling-stroke" strokeWidth="1" stroke="#0c0" />
    <path d="M1333 1167H1470" vectorEffect="non-scaling-stroke" strokeWidth="1" stroke="#d00000" />
    <polygon points="1295,955 1282,1000 1308,1000" fill="#00d000" />
    <polygon points="1465,1155 1515,1167 1465,1180" fill="#d80000" />
    <ellipse cx="1295" cy="1167" rx="39" ry="37" fill="none" stroke="#fff" strokeWidth="1" vectorEffect="non-scaling-stroke" />
    <ellipse cx="1295" cy="1167" rx="8" ry="8" fill="#e09850" stroke="#222" strokeWidth="1" vectorEffect="non-scaling-stroke" />
  </ModelSvg>
);

/* ---------- layer buttons ---------- */

const LayerGrid = styled.div<{ $w: number; $ml: number }>`
  width: ${(p) => p.$w}px;
  margin-left: ${(p) => p.$ml}px;
  height: 25px;
  flex-shrink: 0;
  border: 1px solid #3e3e3e;
  border-radius: 6px;
  overflow: hidden;
  display: grid;
  grid-template-columns: repeat(5, 1fr);
  grid-template-rows: 1fr 1fr;
  gap: 1px;
  background: #4a4a4a;
`;

const LayerCell = styled.div`
  background: #9c9c9c;
  display: flex;
  align-items: center;
  justify-content: center;
`;

const LayerDot = styled.span`
  width: 6px;
  height: 6px;
  border-radius: 3px;
  background: #f09a3c;
  border: 1px solid #333;
`;

const Layers = ({ w, ml, dot }: { w: number; ml: number; dot?: boolean }) => (
  <LayerGrid $w={w} $ml={ml}>
    {Array.from({ length: 10 }).map((_, i) => (
      <LayerCell key={i}>{dot && i === 0 && <LayerDot />}</LayerCell>
    ))}
  </LayerGrid>
);

/* ---------- timeline ---------- */

const Tracks = styled.div`
  position: relative;
  height: 166px;
  display: flex;
  flex-shrink: 0;
  background-color: #727272;
  background-image: linear-gradient(90deg, #7e7e7e 1px, transparent 1px),
    linear-gradient(90deg, #686868 1px, transparent 1px);
  background-size: 48.13px 100%, 24.065px 100%;
  background-position: 19px 0, 19px 0;
`;

const OutOfRange = styled.div<{ $w: number }>`
  width: ${(p) => p.$w}px;
  height: 100%;
  flex-shrink: 0;
  background: rgba(0, 0, 0, 0.37);
`;

const RangeEdge = styled.div`
  flex: 1;
  border-left: 1px solid #333;
`;

const Playhead = styled.div<{ $x: number }>`
  position: absolute;
  left: ${(p) => p.$x}px;
  top: 0;
  bottom: 0;
  width: 3px;
  background: #5ec23a;
`;

const ScrubWrap = styled.div`
  height: 21px;
  background: ${PANEL};
  padding: 1px 8px 0 5px;
  flex-shrink: 0;
  border-bottom: 1px solid #5e5e5e;
`;

const ScrubPill = styled.div`
  position: relative;
  height: 16px;
  border-radius: 8px;
  border: 1px solid #585858;
  background: linear-gradient(#7e7e7e, #a0a0a0);
  display: flex;
  padding-left: 12px;
`;

const ScrubKnob = styled.div`
  position: absolute;
  left: 1px;
  top: 1px;
  width: 12px;
  height: 12px;
  border-radius: 6px;
  background: #666;
`;

const ScrubTick = styled.div`
  width: 48.13px;
  flex-shrink: 0;
  text-align: center;
  font-size: 13.4px;
  line-height: 13px;
  color: #111;
`;

const Pill = styled.div<{ $w: number; $ml?: number }>`
  width: ${(p) => p.$w}px;
  margin-left: ${(p) => p.$ml ?? 0}px;
  height: 25px;
  flex-shrink: 0;
  display: flex;
  border: 1px solid #3a3a3a;
  border-radius: 12px;
  overflow: hidden;
`;

const PillCell = styled.div<{ $w: number }>`
  width: ${(p) => p.$w}px;
  height: 100%;
  padding: 0 6px;
  background: linear-gradient(#8f8f8f, #a8a8a8);
  display: flex;
  align-items: center;
  color: #0c0c0c;
  & + & {
    border-left: 1px solid #333;
  }
`;

const SmallArrow = styled.span<{ $dir: "l" | "r" }>`
  width: 0;
  height: 0;
  border-top: 5px solid transparent;
  border-bottom: 5px solid transparent;
  ${(p) => (p.$dir === "l" ? "border-right: 5px solid #6a6a6a;" : "border-left: 5px solid #6a6a6a;")}
`;

const PillLabel = styled.span`
  margin-left: 8px;
  white-space: nowrap;
`;

const PillValue = styled.span`
  margin-left: auto;
  margin-right: 6px;
`;

/* ---------- outliner and properties ---------- */

const OutlinerBody = styled.div`
  position: relative;
  height: 129px;
  flex-shrink: 0;
  border-bottom: 1px solid #000;
  overflow: hidden;
`;

const Rows = styled.div`
  height: 104px;
  padding-top: 1px;
  background-image: linear-gradient(90deg, #646464 1px, transparent 1px),
    linear-gradient(90deg, #646464 1px, transparent 1px),
    linear-gradient(90deg, #646464 1px, transparent 1px);
  background-size: 1px 100%;
  background-repeat: no-repeat;
  background-position: 155px 0, 180px 0, 205px 0;
`;

const TreeRow = styled.div<{ $pad: number; $tone: "sel" | "odd" | "even" }>`
  height: 25px;
  display: flex;
  align-items: center;
  padding-left: ${(p) => p.$pad}px;
  font-size: 14px;
  color: #0c0c0c;
  background: ${(p) =>
    p.$tone === "sel"
      ? `linear-gradient(90deg, #7b8288 155px, transparent 155px)`
      : p.$tone === "odd"
        ? "rgba(0,0,0,.035)"
        : "transparent"};
`;

const RowName = styled.span<{ $ml: number; $max?: number }>`
  margin-left: ${(p) => p.$ml}px;
  white-space: nowrap;
  overflow: hidden;
  ${(p) => (p.$max ? `max-width:${p.$max}px;` : "")}
`;

const RowSlot = styled.span<{ $ml: number }>`
  margin-left: ${(p) => p.$ml}px;
  display: flex;
`;

const RowBar = styled.span`
  margin-left: 12px;
  width: 2px;
  height: 14px;
  background: #4a4a4a;
`;

const TreeLines = styled.svg`
  position: absolute;
  left: 0;
  top: 0;
  width: 100px;
  height: 110px;
  pointer-events: none;
`;

const VBar = styled.div`
  position: absolute;
  right: 5px;
  top: 6px;
  width: 17px;
  height: 95px;
  border-radius: 8px;
  background: #5e5e5e;
`;

const VThumb = styled.div`
  height: 21px;
  border-radius: 8px;
  background: linear-gradient(90deg, #8a8a8a, #a2a2a2);
  border: 1px solid #666;
`;

const HBar = styled.div`
  position: absolute;
  left: 5px;
  top: 106px;
  width: 219px;
  height: 16px;
  border-radius: 8px;
  background: #5e5e5e;
`;

const HThumb = styled.div`
  width: 142px;
  height: 100%;
  border-radius: 8px;
  background: linear-gradient(#8e8e8e, #a6a6a6 40%, #8a8a8a);
  border: 1px solid #666;
`;

const PropsTabs = styled.div`
  margin-left: 9px;
  height: 23px;
  display: flex;
  border: 1px solid #333;
  border-radius: 6px 0 0 6px;
  overflow: hidden;
`;

const PropsTab = styled.div<{ $on?: boolean }>`
  width: 25px;
  height: 100%;
  flex-shrink: 0;
  background: ${(p) => (p.$on ? "linear-gradient(#6a9ad8,#4f80c0)" : "linear-gradient(#5e5e5e,#484848)")};
  display: flex;
  align-items: center;
  justify-content: center;
  & + & {
    border-left: 1px solid #2e2e2e;
  }
`;

const PropsStub = styled.div`
  width: 13px;
  height: 23px;
  flex-shrink: 0;
  border: 1px solid #383838;
  border-left: none;
  border-radius: 0 5px 5px 0;
  overflow: hidden;
  display: flex;
`;

const PropsCrumb = styled.div`
  height: 25px;
  margin-top: 10px;
  padding-left: 14px;
  display: flex;
  align-items: center;
  font-size: 14px;
  color: #0c0c0c;
`;

const CrumbArrow = styled.span`
  margin: 0 21px 0 9px;
  width: 0;
  height: 0;
  border-top: 4px solid transparent;
  border-bottom: 4px solid transparent;
  border-left: 5px solid #444;
`;

const AddMenu = styled.div`
  width: 232px;
  height: 25px;
  margin: 21px 0 0 10px;
  padding: 0 4px 0 9px;
  border: 1px solid #333;
  border-radius: 6px;
  background: linear-gradient(#565656, #363636);
  color: #eee;
  font-size: 13.6px;
  display: flex;
  align-items: center;
  justify-content: space-between;
`;

const PropsBody = styled.div`
  flex: 1;
  position: relative;
  border-top: 1px solid #656565;
`;

/* ---------- taskbar ---------- */

const Taskbar = styled.div`
  margin-top: 6px;
  height: 40px;
  background: #0c0c0c;
  display: flex;
  flex-shrink: 0;
`;

const TaskItem = styled.div<{ $state?: "open" | "active" }>`
  position: relative;
  width: 46px;
  height: 40px;
  flex-shrink: 0;
  display: flex;
  align-items: center;
  justify-content: center;
  background: ${(p) => (p.$state === "active" ? "#333" : "transparent")};
  &::after {
    content: "";
    display: ${(p) => (p.$state ? "block" : "none")};
    position: absolute;
    bottom: 0;
    height: 3px;
    left: ${(p) => (p.$state === "active" ? 0 : 5)}px;
    right: ${(p) => (p.$state === "active" ? 0 : 5)}px;
    background: #76b9ed;
  }
`;

const Tray = styled.div`
  margin-left: auto;
  display: flex;
  align-items: center;
`;

const TrayItem = styled.div<{ $w: number }>`
  width: ${(p) => p.$w}px;
  height: 40px;
  display: flex;
  align-items: center;
  justify-content: center;
  color: #e8e8e8;
  font-size: 14px;
`;

const DesktopEdge = styled.div`
  width: 6px;
  height: 32px;
  margin-left: 9px;
  border-left: 1px solid #555;
`;

const BrandText = styled.text`
  font-family: "Liberation Sans", sans-serif;
  font-weight: 700;
`;

const stroke = { fill: "none", stroke: "#f2f2f2", strokeWidth: 1.1 };

const taskIcons: { el: React.ReactNode; state?: "open" | "active" }[] = [
  {
    el: (
      <svg width="20" height="20" viewBox="0 0 20 20">
        <path d="M0 3 8.5 1.8V9.5H0zM9.5 1.6 20 0V9.5H9.5zM0 10.5H8.5V18.200L0 17zM9.5 10.5H20V20L9.5 18.400z" fill="#fff" />
      </svg>
    ),
  },
  {
    el: (
      <svg width="20" height="20" viewBox="0 0 20 20">
        <circle cx="10" cy="10" r="8" fill="none" stroke="#fff" strokeWidth="2.2" />
      </svg>
    ),
  },
  {
    el: (
      <svg width="22" height="22" viewBox="0 0 22 22">
        <path d="M3 1v2h12V1M3 21v-2h12v2M3 7h12v8H3zM19 1v9M19 12v9" fill="none" stroke="#fff" strokeWidth="1.4" />
      </svg>
    ),
  },
  {
    el: (
      <svg width="20" height="20" viewBox="0 0 20 20">
        <circle cx="10" cy="10" r="10" fill="#db4437" />
        <path d="M10 10 1.3 5A10 10 0 0 0 10 20L14 13z" fill="#0f9d58" />
        <path d="M10 5H19A10 10 0 0 1 10 20L14 12z" fill="#ffcd40" />
        <circle cx="10" cy="10" r="4.6" fill="#4285f4" stroke="#fff" strokeWidth="1.2" />
      </svg>
    ),
  },
  {
    el: (
      <svg width="20" height="20" viewBox="0 0 20 20">
        <path d="M1 2H8L10 4H19V18H1z" fill="#f8d775" />
        <rect x="1" y="2" width="18" height="3" fill="#fbe8a6" />
        <path d="M5 18V11H15V18H12V14H8V18z" fill="#1e90e0" />
      </svg>
    ),
    state: "open",
  },
  {
    el: (
      <svg width="20" height="20" viewBox="0 0 20 20">
        <rect x="1" y="1" width="18" height="18" rx="3" fill="#d4101c" />
        <circle cx="10" cy="10" r="5" fill="none" stroke="#f6c8c8" strokeWidth="1" />
      </svg>
    ),
  },
  {
    el: (
      <svg width="20" height="20" viewBox="0 0 20 20">
        <path d="M1 6 4 5 9 9 15 2 19 4V16L15 18 9 11 4 15 1 14zM4 8V12L6.5 10zM11.5 10 15 13V7z" fill="#7b3fb0" fillRule="evenodd" />
      </svg>
    ),
  },
  {
    el: (
      <svg width="20" height="20" viewBox="0 0 20 20">
        <path d="M10 2 17 5V14L10 18 7 16 10 14.5V11L4 14V6.5L10 9.5V5.5L7 4z" fill="#d8d8d8" />
      </svg>
    ),
  },
  {
    el: (
      <svg width="20" height="20" viewBox="0 0 20 20">
        <circle cx="10" cy="10" r="9.5" fill="#1a5a8a" />
        <path d="M1 11 7 14 10 12 15 8" stroke="#fff" strokeWidth="2" fill="none" />
        <circle cx="13.5" cy="7" r="3" fill="none" stroke="#fff" strokeWidth="1.6" />
        <circle cx="7" cy="13.5" r="2.2" fill="#fff" />
      </svg>
    ),
  },
  {
    el: (
      <svg width="22" height="22" viewBox="0 0 22 22">
        <rect x="1" y="1" width="18" height="16" fill="#bcd8c8" stroke="#6a8a6a" />
        <path d="M7 20C10 10 15 5 21 2 21 10 17 17 7 20z" fill="#4cb02c" />
        <path d="M8 20 18 6" stroke="#2a7a1a" />
      </svg>
    ),
  },
  {
    el: (
      <svg width="20" height="20" viewBox="0 0 20 20">
        <rect x="0" y="3" width="12" height="12" rx="5" fill="#1e78d8" />
        <rect x="10" y="3" width="10" height="12" rx="4" fill="#1e78d8" />
        <circle cx="6" cy="9" r="3" fill="#fff" />
        <circle cx="15" cy="8" r="1.6" fill="#fff" />
        <rect x="5" y="16" width="10" height="3" fill="#e03030" />
      </svg>
    ),
  },
  {
    el: (
      <svg width="16" height="22" viewBox="0 0 16 22">
        <BrandText x="8" y="9" fontSize="7" textAnchor="middle" fill="#eee">EPIC</BrandText>
        <BrandText x="8" y="17" fontSize="5" textAnchor="middle" fill="#eee">GAMES</BrandText>
      </svg>
    ),
  },
  {
    el: (
      <svg width="20" height="20" viewBox="0 0 20 20">
        <circle cx="10" cy="10" r="9" fill="#111" stroke="#ddd" strokeWidth="1.4" />
        <BrandText x="10" y="15" fontSize="13" textAnchor="middle" fill="#eee">U</BrandText>
      </svg>
    ),
  },
  {
    el: (
      <svg width="20" height="20" viewBox="0 0 20 20">
        <rect width="20" height="20" fill="#dcdcdc" />
        <path d="M5 11A5.5 5.5 0 0 1 15 8M15 10A3.5 3.5 0 0 1 8 12" fill="none" stroke="#777" strokeWidth="2" />
      </svg>
    ),
  },
  {
    el: (
      <svg width="20" height="20" viewBox="0 0 20 20">
        <rect x=".5" y=".5" width="17" height="19" fill="#001d26" stroke="#28a8e0" />
        <BrandText x="9" y="14" fontSize="10" textAnchor="middle" fill="#28a8e0">Ps</BrandText>
      </svg>
    ),
  },
  {
    el: (
      <svg width="20" height="24" viewBox="0 0 20 24">
        <ellipse cx="10" cy="12" rx="9" ry="11" fill="#1c1c1c" />
        <path d="M4 13C7 9 12 15 16 11" fill="none" stroke="#eee08a" strokeWidth="1.5" />
      </svg>
    ),
  },
  {
    el: (
      <svg width="16" height="24" viewBox="0 0 16 24">
        <rect x=".5" y="1" width="15" height="22" fill="#f6f6f6" />
        <rect x="1" y="4" width="5" height="6" fill="#f028d0" />
        <rect x="11" y="16" width="4" height="5" fill="#20e0e0" />
        <path d="M3 12h10M3 15h7" stroke="#ccc" />
      </svg>
    ),
    state: "open",
  },
  {
    el: (
      <svg width="20" height="24" viewBox="0 0 20 24">
        <defs>
          <linearGradient id="mGrad" x1="0" y1="0" x2="1" y2="0">
            <stop offset="0" stopColor="#f8f020" />
            <stop offset=".6" stopColor="#f8f020" />
            <stop offset="1" stopColor="#40e040" />
          </linearGradient>
        </defs>
        <BrandText x="10" y="21" fontSize="25" textAnchor="middle" fill="url(#mGrad)">M</BrandText>
      </svg>
    ),
    state: "open",
  },
  { el: <BlenderLogo s={20} />, state: "active" },
];

const scrubLabels = Array.from({ length: 34 }, (_, i) => -50 + i * 10);

/* ---------- app ---------- */

export default function App() {
  return (
    <Page>
      <GlobalStyle />
      <Win>
        <TitleBar>
          <BlenderLogo s={20} />
          <TitleText>
            Blender [C:¥Users¥game111¥Desktop¥FRONTLINE_S¥FrontLine_機体_マップ¥登場機体_NEW¥遠距離型¥snipe_2.blend]
          </TitleText>
          <WinButtons>
            <WinButton>
              <svg width="14" height="14" viewBox="0 0 14 14">
                <path d="M1 7.5H13" stroke="#111" />
              </svg>
            </WinButton>
            <WinButton>
              <svg width="14" height="14" viewBox="0 0 14 14">
                <rect x=".5" y=".5" width="12" height="12" fill="none" stroke="#111" />
              </svg>
            </WinButton>
            <WinButton>
              <svg width="14" height="14" viewBox="0 0 14 14">
                <path d="M.5 .5 13.5 13.5M13.5 .5 .5 13.5" stroke="#111" />
              </svg>
            </WinButton>
          </WinButtons>
        </TitleBar>

        <HeaderBar $h={33} $pad={5}>
          <Corner side="left:0;bottom:0;" />
          <Corner side="right:0;top:0;" flip />
          <Group $w={39}>
            <Seg $tone="dark">
              <InfoIcon />
              <UpDown />
            </Seg>
          </Group>
          <MenuLabel $w={82} $ml={16}>ファイル</MenuLabel>
          <MenuLabel $w={80}>レンダー</MenuLabel>
          <MenuLabel $w={94}>ウィンドウ</MenuLabel>
          <MenuLabel $w={58}>ヘルプ</MenuLabel>
          <Group $w={239}>
            <Seg $tone="dark" $w={39}>
              <LayoutIcon />
              <UpDown />
            </Seg>
            <Seg $tone="flat" $pad={9}><SegText>Default</SegText></Seg>
            <Seg $tone="light" $w={24}><PlusIcon /></Seg>
            <Seg $tone="light" $w={25}><CrossIcon /></Seg>
          </Group>
          <Group $w={239} $ml={8}>
            <Seg $tone="dark" $w={38}>
              <SceneIcon />
              <UpDown />
            </Seg>
            <Seg $tone="flat" $pad={9}><SegText>Scene</SegText></Seg>
            <Seg $tone="light" $w={24}><PlusIcon /></Seg>
            <Seg $tone="light" $w={26}><CrossIcon /></Seg>
          </Group>
          <Group $w={147} $ml={20}>
            <Seg $tone="dark" $pad={9}>
              <SegText>Blenderレンダー</SegText>
              <UpDown />
              <SegEnd />
            </Seg>
          </Group>
          <LogoWrap>
            <BlenderLogo s={20} />
          </LogoWrap>
          <StatsText>
            v2.79 | 頂点:1,433 | 面:1,270 | 三角面:2,760 | オブジェクト:1/16 | ランプ:0/0 | メモリ:18.63M | 平面.003
          </StatsText>
        </HeaderBar>

        <Workspace>
          <LeftCol>
            <View3D>
              <Toolshelf>
                <ToolshelfTop>
                  <TabStrip>
                    <VTab $h={50} $mb={6} $on><VTabText>シー</VTabText></VTab>
                    <VTab $h={37} $mb={5}><VTabText>作</VTabText></VTab>
                    <VTab $h={37} $mb={5}><VTabText>関</VTabText></VTab>
                    <VTab $h={100} $mb={8}><VTabText>アニメーショ</VTabText></VTab>
                    <VTab $h={60} $mb={7}><VTabText>物理演</VTabText></VTab>
                    <VTab $h={113} $mb={0}><VTabText>グリースペンシ</VTabText></VTab>
                  </TabStrip>
                  <PanelCol>
                    <PanelHead $h={28} $mb={11}>
                      <Tri />
                      トランスフォーム
                      <Grip />
                    </PanelHead>
                    <Stack $n={3}>
                      <StackBtn>移動</StackBtn>
                      <StackBtn>回転</StackBtn>
                      <StackBtn>拡大縮小</StackBtn>
                    </Stack>
                    <Stack $n={1} $mt={6}>
                      <StackBtn>ミラー</StackBtn>
                    </Stack>
                    <Divider />
                    <PanelHead $h={25} $mb={13}>
                      <Tri />
                      編集
                      <Grip />
                    </PanelHead>
                    <Stack $n={3}>
                      <StackBtn>複製</StackBtn>
                      <StackBtn>リンク複製</StackBtn>
                      <StackBtn>削除</StackBtn>
                    </Stack>
                    <Stack $n={1} $mt={7}>
                      <StackBtn>統合</StackBtn>
                    </Stack>
                    <DarkMenu $mt={5}>
                      原点を設定
                      <UpDown />
                    </DarkMenu>
                    <SubLabel>シェーディング:</SubLabel>
                    <SplitRow>
                      <SplitBtn>スムー</SplitBtn>
                      <SplitBtn>フラッ</SplitBtn>
                    </SplitRow>
                    <SubLabel>データ転送:</SubLabel>
                    <SplitRow>
                      <SplitBtn>データ</SplitBtn>
                      <SplitBtn>データ</SplitBtn>
                    </SplitRow>
                  </PanelCol>
                  <ScrollTrack>
                    <ScrollThumb />
                  </ScrollTrack>
                </ToolshelfTop>
                <OperatorPanel>
                  <PanelHead $h={24} $mb={0} $w={182}>
                    <Tri />
                    オペレーター
                    <Grip />
                  </PanelHead>
                </OperatorPanel>
              </Toolshelf>

              <Viewport>
                <AxisLines width="1449" height="708">
                  <path d="M0 290.5H1449" stroke="#6e2c2c" />
                  <path d="M626.5 0V708" stroke="#1f7a1f" />
                </AxisLines>
                <Robot />
                <ViewName>トップ・平行投影</ViewName>
                <AxisWidget viewBox="0 0 44 50">
                  <path d="M4 40V12" stroke="#20c020" />
                  <path d="M4 40H32" stroke="#c82020" />
                  <text x="6" y="10" fontSize="11" fill="#20c020" fontFamily="Noto Sans">y</text>
                  <text x="30" y="38" fontSize="11" fill="#c82020" fontFamily="Noto Sans">x</text>
                </AxisWidget>
                <ObjName>(211) 平面.003</ObjName>
                <PlusTab>+</PlusTab>
                <Corner side="right:0;top:0;" flip />
              </Viewport>
            </View3D>

            <HeaderBar $h={34} $pad={5}>
              <Corner side="left:0;bottom:0;" />
              <Group $w={40}>
                <Seg $tone="dark">
                  <ViewCube />
                  <UpDown />
                </Seg>
              </Group>
              <MenuLabel $w={66} $ml={16}>ビュー</MenuLabel>
              <MenuLabel $w={53}>選択</MenuLabel>
              <MenuLabel $w={54}>追加</MenuLabel>
              <MenuLabel $w={100}>オブジェクト</MenuLabel>
              <Group $w={186}>
                <Seg $tone="dark" $pad={6}>
                  <OrangeCube />
                  <SegText>オブジェクトモード</SegText>
                  <UpDown />
                  <SegEnd />
                </Seg>
              </Group>
              <Group $w={40} $ml={7}>
                <Seg $tone="dark">
                  <Sphere />
                  <UpDown />
                </Seg>
              </Group>
              <Group $w={64} $ml={6}>
                <Seg $tone="dark" $w={40}>
                  <PivotIcon />
                  <UpDown />
                </Seg>
                <Seg $tone="light"><AlignIcon /></Seg>
              </Group>
              <Group $w={211} $ml={8}>
                <Seg $tone="light" $w={23}><AxisIcon /></Seg>
                <Seg $tone="blue" $w={25}><MoveArrow /></Seg>
                <Seg $tone="dark" $w={25}><RotateArc /></Seg>
                <Seg $tone="dark" $w={26}><ScalePin /></Seg>
                <Seg $tone="dark" $pad={10}>
                  <SegText>グローバル</SegText>
                  <UpDown />
                  <SegEnd />
                </Seg>
              </Group>
              <Layers w={59} ml={8} dot />
              <Layers w={58} ml={7} />
              <Group $w={24} $ml={8}>
                <Seg $tone="light"><LayerCopy /></Seg>
              </Group>
              <Group $w={24} $ml={7}>
                <Seg $tone="flat"><ProportionalIcon /></Seg>
              </Group>
              <Group $w={89} $ml={7}>
                <Seg $tone="light" $w={23}><MagnetIcon /></Seg>
                <Seg $tone="dark" $w={41}>
                  <SnapIcon />
                  <UpDown />
                </Seg>
                <Seg $tone="light"><GridDot /></Seg>
              </Group>
              <Group $w={48} $ml={7}>
                <Seg $tone="light" $w={24}><CameraIcon star /></Seg>
                <Seg $tone="light"><ClapIcon /></Seg>
              </Group>
            </HeaderBar>

            <Tracks>
              <OutOfRange $w={282} />
              <RangeEdge />
              <OutOfRange $w={161} />
              <Playhead $x={1298} />
              <Corner side="right:0;top:0;" flip />
            </Tracks>
            <ScrubWrap>
              <ScrubPill>
                <ScrubKnob />
                {scrubLabels.map((n) => (
                  <ScrubTick key={n}>{n}</ScrubTick>
                ))}
              </ScrubPill>
            </ScrubWrap>
            <HeaderBar $h={33} $pad={5}>
              <Corner side="left:0;bottom:0;" />
              <Group $w={39}>
                <Seg $tone="dark">
                  <ClockIcon />
                  <UpDown />
                </Seg>
              </Group>
              <MenuLabel $w={65} $ml={18}>ビュー</MenuLabel>
              <MenuLabel $w={81}>マーカー</MenuLabel>
              <MenuLabel $w={81}>フレーム</MenuLabel>
              <MenuLabel $w={44}>再生</MenuLabel>
              <Group $w={49}>
                <Seg $tone="light" $w={25}><ClockIcon part /></Seg>
                <Seg $tone="light"><LockIcon /></Seg>
              </Group>
              <Pill $w={287} $ml={7}>
                <PillCell $w={144}>
                  <SmallArrow $dir="l" />
                  <PillLabel>開始:</PillLabel>
                  <PillValue>1</PillValue>
                  <SmallArrow $dir="r" />
                </PillCell>
                <PillCell $w={143}>
                  <SmallArrow $dir="l" />
                  <PillLabel>終了:</PillLabel>
                  <PillValue>250</PillValue>
                  <SmallArrow $dir="r" />
                </PillCell>
              </Pill>
              <Pill $w={112} $ml={7}>
                <PillCell $w={112}>
                  <SmallArrow $dir="l" />
                  <PillValue>211</PillValue>
                  <SmallArrow $dir="r" />
                </PillCell>
              </Pill>
              <Group $w={150} $ml={19}>
                {["first", "prev", "back", "play", "next", "last"].map((k) => (
                  <Seg key={k} $tone="light"><Transport kind={k} /></Seg>
                ))}
              </Group>
              <Group $w={112} $ml={6}>
                <Seg $tone="dark" $pad={9}>
                  <SegText>同期しない</SegText>
                  <UpDown />
                  <SegEnd />
                </Seg>
              </Group>
              <Group $w={25} $ml={20}>
                <Seg $tone="light"><RecordIcon /></Seg>
              </Group>
              <Group $w={40} $ml={6}>
                <Seg $tone="dark">
                  <DiamondIcon />
                  <UpDown />
                </Seg>
              </Group>
              <Group $w={218} $ml={6}>
                <Seg $tone="flat" $pad={3}><KeyIcon gold /></Seg>
                <Seg $tone="light" $w={24}><KeyIcon /></Seg>
                <Seg $tone="light" $w={25}><KeyIcon red /></Seg>
              </Group>
            </HeaderBar>
          </LeftCol>

          <RightCol>
            <HeaderBar $h={33} $pad={4}>
              <Corner side="right:0;top:0;" flip />
              <Group $w={40}>
                <Seg $tone="dark">
                  <OutlinerIcon />
                  <UpDown />
                </Seg>
              </Group>
              <MenuLabel $w={66} $ml={17}>ビュー</MenuLabel>
              <MenuLabel $w={44}>検索</MenuLabel>
              <Group $w={74}>
                <Seg $tone="dark" $pad={9}><SegText>全てのシーン</SegText></Seg>
              </Group>
            </HeaderBar>

            <OutlinerBody>
              <Rows>
                <TreeRow $pad={7} $tone="sel">
                  <Expander open />
                  <RowSlot $ml={9}><SceneIcon /></RowSlot>
                  <RowName $ml={7}>Scene</RowName>
                </TreeRow>
                <TreeRow $pad={32} $tone="odd">
                  <Expander />
                  <RowSlot $ml={8}><RenderLayers /></RowSlot>
                  <RowName $ml={7} $max={75}>レンダーレイヤー</RowName>
                </TreeRow>
                <TreeRow $pad={53} $tone="even">
                  <WorldIcon ring />
                  <RowName $ml={7}>World</RowName>
                </TreeRow>
                <TreeRow $pad={32} $tone="odd">
                  <Expander />
                  <RowSlot $ml={8}><MeshTri /></RowSlot>
                  <RowName $ml={7}>Cube</RowName>
                  <RowBar />
                  <RowSlot $ml={13}><MeshGhost /></RowSlot>
                  <RowSlot $ml={3}><EyeIcon /></RowSlot>
                  <RowSlot $ml={9}><CursorIcon /></RowSlot>
                  <RowSlot $ml={4}><CameraIcon /></RowSlot>
                </TreeRow>
              </Rows>
              <TreeLines viewBox="0 0 100 110">
                <path d="M19 12H30M38 26V104M44 63H52M44 88H52" stroke="#454545" fill="none" />
              </TreeLines>
              <VBar><VThumb /></VBar>
              <HBar><HThumb /></HBar>
              <Corner side="left:0;bottom:0;" />
            </OutlinerBody>

            <HeaderBar $h={29} $pad={4} style={{ paddingLeft: 0, borderBottom: "none", overflow: "hidden" }}>
              <Corner side="right:0;top:0;" flip />
              <PropsStub>
                <Seg $tone="dark"><UpDown /></Seg>
              </PropsStub>
              <PropsTabs>
                <PropsTab><CameraIcon s={17} /></PropsTab>
                <PropsTab><RenderLayers s={17} /></PropsTab>
                <PropsTab><SceneIcon s={17} /></PropsTab>
                <PropsTab><WorldIcon s={17} /></PropsTab>
                <PropsTab><OrangeCube s={17} /></PropsTab>
                <PropsTab><ChainIcon /></PropsTab>
                <PropsTab $on><WrenchIcon /></PropsTab>
                <PropsTab><MeshTri c="#999" s={17} /></PropsTab>
                <PropsTab><MaterialIcon /></PropsTab>
                <PropsTab />
              </PropsTabs>
            </HeaderBar>

            <PropsBody>
              <PropsCrumb>
                <PinIcon />
                <RowSlot $ml={7}><SceneIcon /></RowSlot>
                <CrumbArrow />
                <OrangeCube />
                <RowName $ml={7}>平面.003</RowName>
              </PropsCrumb>
              <AddMenu>
                追加
                <UpDown />
              </AddMenu>
              <Corner side="left:0;bottom:0;" />
            </PropsBody>
          </RightCol>
        </Workspace>
      </Win>

      <Taskbar>
        {taskIcons.map((t, i) => (
          <TaskItem key={i} $state={t.state}>{t.el}</TaskItem>
        ))}
        <Tray>
          <TrayItem $w={36}>
            <svg width="20" height="20" viewBox="0 0 20 20">
              <g {...stroke}>
                <circle cx="13" cy="5" r="3" />
                <circle cx="6" cy="9" r="3" />
                <path d="M1 18C1 13 11 13 11 18M12 11C15 9 19 11 19 15" />
              </g>
            </svg>
          </TrayItem>
          <TrayItem $w={34}>
            <svg width="18" height="10" viewBox="0 0 18 10">
              <path d="M1 9 9 1 17 9" {...stroke} />
            </svg>
          </TrayItem>
          <TrayItem $w={30}>
            <svg width="22" height="14" viewBox="0 0 22 14">
              <path d="M4 13A4 4 0 0 1 4 6 6 6 0 0 1 15 4 4.5 4.5 0 0 1 18 13z" fill="#d8d8d8" />
            </svg>
          </TrayItem>
          <TrayItem $w={31}>
            <svg width="18" height="18" viewBox="0 0 18 18">
              <g {...stroke}>
                <path d="M1 17A16 16 0 0 1 17 1M5 17A12 12 0 0 1 17 5M9 17A8 8 0 0 1 17 9" />
              </g>
              <circle cx="15" cy="15" r="1.5" fill="#f2f2f2" />
            </svg>
          </TrayItem>
          <TrayItem $w={29}>
            <svg width="22" height="14" viewBox="0 0 22 14">
              <rect x="5" y="3" width="15" height="9" {...stroke} />
              <rect x="7" y="5" width="10" height="5" fill="#f2f2f2" />
              <path d="M20.5 6v3" stroke="#f2f2f2" />
              <path d="M1 1h4v4H1zM3 5v3h3M2 0v1M4 0v1" {...stroke} />
            </svg>
          </TrayItem>
          <TrayItem $w={29}>
            <svg width="22" height="14" viewBox="0 0 22 14">
              <path d="M1 4.5H4L8 1V13L4 9.5H1zM12 4l6 6M18 4l-6 6" {...stroke} />
            </svg>
          </TrayItem>
          <TrayItem $w={33}>
            <svg width="22" height="15" viewBox="0 0 22 15">
              <path d="M4 14A4 4 0 0 1 4 6 7 7 0 0 1 17 5 4.5 4.5 0 0 1 18 14z" fill="#f2f2f2" />
              <path d="M11 5 7 9H9.5V13H12.5V9H15z" fill="#111" />
            </svg>
          </TrayItem>
          <TrayItem $w={35}>
            <svg width="22" height="22" viewBox="0 0 22 22">
              <g {...stroke}>
                <path d="M3 20C1 18 5 12 14 3 16 1 18 2 17 4 12 10 8 15 6 16 5 16 5 15 6 13L13 6" />
                <path d="M15 8C18 8 20 9 19 11" />
              </g>
            </svg>
          </TrayItem>
          <TrayItem $w={33}>
            <svg width="18" height="18" viewBox="0 0 18 18">
              <circle cx="9" cy="9" r="9" fill="#8a8a8a" />
              <path d="M5.5 5.5 12.5 12.5M12.5 5.5 5.5 12.5" stroke="#0c0c0c" strokeWidth="2" />
            </svg>
          </TrayItem>
          <TrayItem $w={48}>14:05</TrayItem>
          <TrayItem $w={52}>
            <svg width="20" height="20" viewBox="0 0 20 20">
              <path d="M0 0H20V17H12L10 19.5 8 17H0z" fill="#f6f6f6" />
              <path d="M4 5H16M4 8.5H16M4 12H12" stroke="#111" />
            </svg>
          </TrayItem>
          <DesktopEdge />
        </Tray>
      </Taskbar>
    </Page>
  );
}
